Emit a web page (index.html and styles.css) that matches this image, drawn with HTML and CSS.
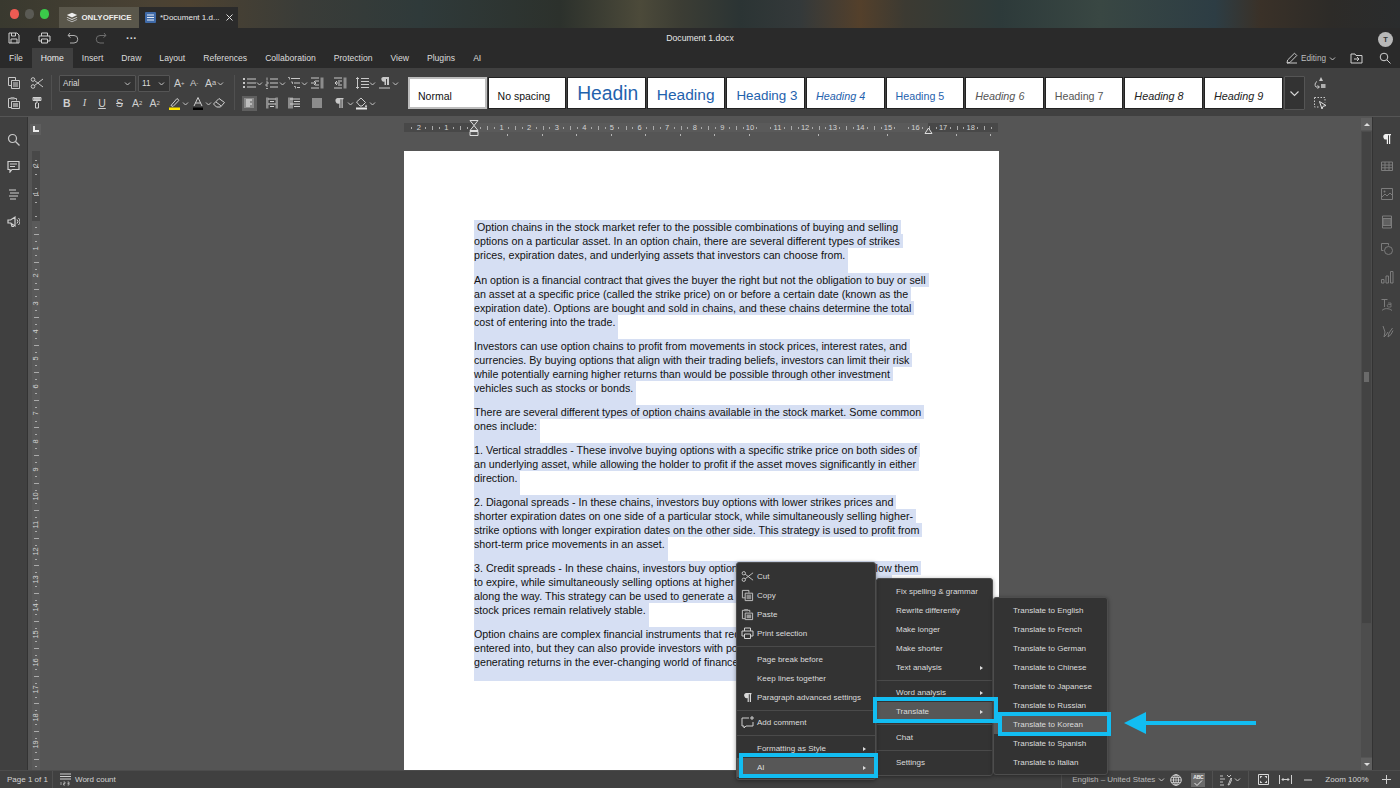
FILE: index.html
```html
<!DOCTYPE html>
<html lang="en">
<head>
<meta charset="utf-8">
<title>Document 1.docx</title>
<link rel="stylesheet" href="styles.css">
</head>
<body>
<svg class="sprite" width="0" height="0">
  <symbol id="chev" viewBox="0 0 7 7"><path d="M1 2.500l2.500 2.500L6 2.500" fill="none" stroke="#c4c4c4"/></symbol>
  <symbol id="copy" viewBox="0 0 14 14"><path d="M1.500 1.500h7v2.500M4.500 4.500h8v8h-8zM1.500 1.500v8h3" fill="none" stroke="#c8c8c8"/><path d="M6 6h5v5H6z" fill="#8a8a8a"/></symbol>
  <symbol id="paste" viewBox="0 0 14 14"><path d="M1.500 2.500h8v2M1.500 2.500v9h3M4.500 5.500h8v7h-8z" fill="none" stroke="#c8c8c8"/><path d="M3.500 1h4v2.500h-4zM6 7h5v4H6z" fill="#9a9a9a"/></symbol>
  <symbol id="scissors" viewBox="0 0 14 14"><circle cx="3" cy="3.500" r="1.800" fill="none" stroke="#c8c8c8"/><circle cx="3" cy="10.500" r="1.800" fill="none" stroke="#c8c8c8"/><path d="M4.500 4.500L13 11M4.500 9.500L13 3" fill="none" stroke="#c8c8c8"/></symbol>
</svg>

<div class="app">
  <div class="wallpaper">
    <div class="lights"><i class="light red"></i><i class="light grey"></i><i class="light green"></i></div>
    <div class="tab-home">
      <svg width="12" height="11" viewBox="0 0 14 12"><path d="M7 .5l6 2.700-6 2.700-6-2.700z" fill="#eee"/><path d="M1.500 5.300L7 7.800l5.500-2.500 .8 .7L7 8.900.7 6z" fill="#ddd"/><path d="M1.500 7.900L7 10.400l5.500-2.500 .8 .7L7 11.500.7 8.600z" fill="#bbb"/></svg>
      <span>ONLYOFFICE</span>
    </div>
    <div class="tab-doc">
      <svg width="11" height="11" viewBox="0 0 11 11"><rect width="11" height="11" rx="1" fill="#3f6aa8"/><path d="M2 3h7M2 5.500h7M2 8h7" stroke="#e8eef8"/></svg>
      <span>*Document 1.d...</span>
      <svg class="close" width="7" height="7" viewBox="0 0 7 7"><path d="M.5 .5l6 6M6.500 .5l-6 6" stroke="#ddd"/></svg>
    </div>
  </div>

  <div class="head-row">
    <div class="quick">
      <svg width="12" height="12" viewBox="0 0 12 12"><path d="M1 1h8l2 2v8H1zM3.500 1v3h4V1M3 11V7h6v4" fill="none" stroke="#d0d0d0"/></svg>
      <svg width="13" height="12" viewBox="0 0 13 12"><path d="M3.500 4V1h6v3M3 9H1V4h11v5h-2M3.500 7h6v4h-6z" fill="none" stroke="#d0d0d0"/></svg>
      <svg width="12" height="12" viewBox="0 0 12 12"><path d="M3 1L1 3.500 3.500 5.500M1.200 3.500H7a3.500 3.500 0 0 1 0 7.500H3" fill="none" stroke="#b0b0b0"/></svg>
      <svg width="12" height="12" viewBox="0 0 12 12"><path d="M9 1l2 2.500L8.500 5.500M10.800 3.500H5a3.500 3.500 0 0 0 0 7.500h4" fill="none" stroke="#6e6e6e"/></svg>
      <span class="dots">···</span>
    </div>
    <div class="doc-title">Document 1.docx</div>
    <div class="avatar-wrap"><div class="avatar">T</div></div>
  </div>

  <div class="tabs-row">
    <nav class="tabs">
      <span class="tab">File</span><span class="tab active">Home</span><span class="tab">Insert</span><span class="tab">Draw</span><span class="tab">Layout</span><span class="tab">References</span><span class="tab">Collaboration</span><span class="tab">Protection</span><span class="tab">View</span><span class="tab">Plugins</span><span class="tab">AI</span>
    </nav>
    <div class="tabs-right">
      <svg width="12" height="12" viewBox="0 0 12 12"><path d="M1 11l.6-3L8.500 1.200l2.300 2.300L4 10.400zM1 11h10" fill="none" stroke="#c8c8c8"/></svg>
      <span class="editing">Editing</span>
      <svg class="ch" width="7" height="7"><use href="#chev"/></svg>
      <svg class="folder" width="13" height="12" viewBox="0 0 13 12"><path d="M1 2h4l1 1.500h6V11H1zM4 7h5M7 5l2 2-2 2" fill="none" stroke="#d0d0d0"/></svg>
      <svg class="find" width="12" height="12" viewBox="0 0 12 12"><circle cx="5" cy="5" r="3.800" fill="none" stroke="#d0d0d0"/><path d="M8 8l3.500 3.500" stroke="#d0d0d0"/></svg>
    </div>
  </div>

  <div class="toolbar">
    <div class="tg clip-group">
      <div class="tr"><span class="cell w23"><svg class="ico" width="14" height="14"><use href="#copy"/></svg></span><span class="cell w23"><svg class="ico" width="14" height="14"><use href="#scissors"/></svg></span></div>
      <div class="tr"><span class="cell w23"><svg class="ico" width="14" height="14"><use href="#paste"/></svg></span><span class="cell w23"><svg class="ico" width="14" height="14" viewBox="0 0 14 14"><path d="M3 1.500h8v3H3zM7 4.500v2.500H5.500v5h3V7" fill="none" stroke="#d0d0d0"/><path d="M3.500 2h7v2h-7z" fill="#bbb"/></svg></span></div>
    </div>
    <div class="vdiv first"></div>
    <div class="tg font-group">
      <div class="tr">
        <div class="select font-sel"><span>Arial</span><svg width="7" height="7"><use href="#chev"/></svg></div>
        <div class="select size-sel"><span>11</span><svg width="7" height="7"><use href="#chev"/></svg></div>
        <span class="cell w16 glyph">A<sup>+</sup></span><span class="cell w16 glyph small">A<sup>-</sup></span>
        <span class="cell w22 glyph aa">A<small>a</small><svg width="7" height="7"><use href="#chev"/></svg></span>
      </div>
      <div class="tr">
        <span class="cell w17 glyph b">B</span><span class="cell w17 glyph i">I</span><span class="cell w17 glyph u">U</span><span class="cell w17 glyph s">S</span><span class="cell w17 glyph">A<sup>2</sup></span><span class="cell w17 glyph">A<sub>2</sub></span>
        <span class="cell w23"><svg class="ico" width="14" height="14" viewBox="0 0 14 14"><path d="M3 9.500L9 2.500l2 1.800L5 10.500z" fill="none" stroke="#d0d0d0"/><rect x="1" y="11.500" width="11" height="2.500" fill="#ffe600"/></svg><svg width="7" height="7"><use href="#chev"/></svg></span>
        <span class="cell w23"><svg class="ico" width="14" height="14" viewBox="0 0 14 14"><path d="M3 10L7 1.500 11 10M4.500 7h5" fill="none" stroke="#d0d0d0"/><rect x="2" y="11.500" width="10" height="2.500" fill="#000"/></svg><svg width="7" height="7"><use href="#chev"/></svg></span>
        <span class="cell w17"><svg class="ico" width="14" height="14" viewBox="0 0 14 14"><path d="M1.500 8l5.500-5.500 5.500 4L8.500 11H4.500z" fill="none" stroke="#d0d0d0"/><path d="M4 6l5 3.800" stroke="#d0d0d0"/></svg></span>
      </div>
    </div>
    <div class="vdiv second"></div>
    <div class="tg para-group">
      <div class="tr">
        <span class="cell w22"><svg class="ico" width="14" height="14" viewBox="0 0 14 14"><path d="M5 3h9M5 7h9M5 11h9" stroke="#c8c8c8"/><path d="M1 2h2v2H1zM1 6h2v2H1zM1 10h2v2H1z" fill="#c8c8c8"/></svg><svg width="7" height="7"><use href="#chev"/></svg></span>
        <span class="cell w22"><svg class="ico" width="14" height="14" viewBox="0 0 14 14"><path d="M5 3h8M5 7h8M5 11h8" stroke="#c8c8c8"/><path d="M2 1.500v3M1 6h2v2H1v2h2M1 12.500h2" fill="none" stroke="#c8c8c8" stroke-width=".8"/></svg><svg width="7" height="7"><use href="#chev"/></svg></span>
        <span class="cell w22"><svg class="ico" width="14" height="14" viewBox="0 0 14 14"><path d="M4 2.500h9M7 7h6M10 11.500h3" stroke="#c8c8c8"/><path d="M1 1.500h1.500v2M4 6h1.500v2M7 10.500h1.500v2" fill="none" stroke="#c8c8c8" stroke-width=".8"/></svg><svg width="7" height="7"><use href="#chev"/></svg></span>
        <span class="cell w22"><svg class="ico" width="14" height="14" viewBox="0 0 14 14"><path d="M10.500 1.500h3v11h-3z" fill="#8c8c8c"/><path d="M1 2h8M5 5h4M5 9h4M1 12h8M1 7h5M4 5l2 2-2 2" fill="none" stroke="#c8c8c8"/></svg></span>
        <span class="cell w22"><svg class="ico" width="14" height="14" viewBox="0 0 14 14"><path d="M10.500 1.500h3v11h-3z" fill="#8c8c8c"/><path d="M1 2h8M5 5h4M5 9h4M1 12h8M7 7H2M4 5L2 7l2 2" fill="none" stroke="#c8c8c8"/></svg></span>
        <span class="cell w22"><svg class="ico" width="14" height="14" viewBox="0 0 14 14"><path d="M6 2.500h8M6 5.500h8M6 8.500h8M6 11.500h8M2.500 1.500v11M1 3l1.500-1.500L4 3M1 11l1.500 1.500L4 11" fill="none" stroke="#c8c8c8"/></svg><svg width="7" height="7"><use href="#chev"/></svg></span>
        <span class="cell w22"><svg class="ico" width="14" height="14" viewBox="0 0 14 14"><path d="M5 1h6v8H9V3H8v6H6.500V5.500A2.300 2.300 0 0 1 5 1z" fill="#c8c8c8"/><path d="M1 12h11" stroke="#c8c8c8"/></svg><svg width="7" height="7"><use href="#chev"/></svg></span>
      </div>
      <div class="tr">
        <span class="cell w22 on"><svg class="ico" width="14" height="14" viewBox="0 0 14 14"><path d="M2 2h10v10H2z" fill="#8a8a8a"/><path d="M4 4h6M4 6h4M4 8h6M4 10h4" stroke="#efefef"/></svg></span>
        <span class="cell w22"><svg class="ico" width="14" height="14" viewBox="0 0 14 14"><path d="M1 1.500h2.500v11H1zM10.500 1.500H13v11h-2.500z" fill="#8c8c8c"/><path d="M3 3h8M5 5.500h4M3 8h8M5 10.500h4" stroke="#d0d0d0"/></svg></span>
        <span class="cell w22"><svg class="ico" width="14" height="14" viewBox="0 0 14 14"><path d="M1 1.500h5v11H1z" fill="#8c8c8c"/><path d="M3 3h10M7 5.500h6M3 8h10M7 10.500h6" stroke="#d0d0d0"/></svg></span>
        <span class="cell w22"><svg class="ico" width="14" height="14" viewBox="0 0 14 14"><path d="M2 2h10v10H2z" fill="#8c8c8c"/></svg></span>
        <span class="cell w22"><svg class="ico" width="14" height="14" viewBox="0 0 14 14"><path d="M4.500 2h6v1.200h-.8V12H8.500V3.200h-1V12H6.300V7.500A2.800 2.800 0 0 1 4.500 2z" fill="#c8c8c8"/></svg><svg width="7" height="7"><use href="#chev"/></svg></span>
        <span class="cell w22"><svg class="ico" width="14" height="14" viewBox="0 0 14 14"><path d="M1.500 6L6 2l4.500 4.500-3.500 3.500H5z" fill="none" stroke="#d0d0d0"/><path d="M11 8.500l1.200 2-1.200 .8-1.200-.8z" fill="#d0d0d0"/><rect x="1" y="11.500" width="11" height="2" fill="#e8e8e8"/></svg><svg width="7" height="7"><use href="#chev"/></svg></span>
      </div>
    </div>
    <div class="styles">
      <div class="tile selected normal"><span>Normal</span></div>
      <div class="tile normal"><span>No spacing</span></div>
      <div class="tile h1"><span>Headin</span></div>
      <div class="tile h2"><span>Heading</span></div>
      <div class="tile h3"><span>Heading 3</span></div>
      <div class="tile h4"><span>Heading 4</span></div>
      <div class="tile h5"><span>Heading 5</span></div>
      <div class="tile h6"><span>Heading 6</span></div>
      <div class="tile h7"><span>Heading 7</span></div>
      <div class="tile h8"><span>Heading 8</span></div>
      <div class="tile h8"><span>Heading 9</span></div>
      <div class="more-styles"><svg width="11" height="11" viewBox="0 0 11 11"><path d="M1.500 3.500l4 4 4-4" fill="none" stroke="#d8d8d8" stroke-width="1.100"/></svg></div>
    </div>
    <div class="tg side-tools">
      <div class="tr"><svg width="14" height="14" viewBox="0 0 14 14"><path d="M4 5.500A3.500 3.500 0 0 0 3 11h3M4.500 9.500L6.500 11l-2 1.500" fill="none" stroke="#c8c8c8"/><path d="M8 1l2 4H6z" fill="#c8c8c8"/><rect x="8" y="8" width="4.500" height="4" fill="#b0b0b0"/></svg></div>
      <div class="tr"><svg width="14" height="14" viewBox="0 0 14 14"><path d="M1.500 1.500h10.500v5M1.500 1.500v9.500H6" fill="none" stroke="#c8c8c8" stroke-dasharray="1.500 1.500"/><path d="M6.500 5.500l6.500 4-3 .8-1 2.700z" fill="none" stroke="#e0e0e0"/></svg></div>
    </div>
  </div>

  <div class="main">
    <aside class="left-panel">
      <svg width="13" height="13" viewBox="0 0 13 13"><circle cx="5.500" cy="5.500" r="4" fill="none" stroke="#c8c8c8" stroke-width="1.200"/><path d="M8.500 8.500l4 4" stroke="#c8c8c8" stroke-width="1.200"/></svg>
      <svg width="13" height="13" viewBox="0 0 13 13"><path d="M1 1.500h11v8H5L3 12V9.500H1z" fill="none" stroke="#d0d0d0" stroke-width="1.200"/><path d="M3 4h7M3 6.500h5" stroke="#d0d0d0"/></svg>
      <svg width="13" height="13" viewBox="0 0 13 13"><path d="M2 2h7M3 5h9M2 8h9M3 11h6" stroke="#d0d0d0" stroke-width="1.200"/></svg>
      <svg width="13" height="13" viewBox="0 0 13 13"><path d="M1 5h2.500L8 2v9L3.500 8H1zM4 8l1 3.500h2" fill="none" stroke="#d0d0d0" stroke-width="1.200"/><path d="M10 4.500a3 3 0 0 1 0 4M11.500 3a5 5 0 0 1 0 7" fill="none" stroke="#d0d0d0"/></svg>
    </aside>
    <div class="v-rail">
      <div class="corner"><svg width="7" height="7" viewBox="0 0 7 7"><path d="M1 0h2v4h4v2H1z" fill="#eee"/></svg></div>
      <div class="v-ruler">
        <span>2</span><span>1</span><span></span><span>1</span><span>2</span><span>3</span><span>4</span><span>5</span><span>6</span><span>7</span><span>8</span><span>9</span><span>10</span><span>11</span><span>12</span><span>13</span><span>14</span><span>15</span><span>16</span><span>17</span><span>18</span><span>19</span>
      </div>
    </div>
    <div class="canvas">
      <div class="h-ruler">
        <div class="h-band">
          <span>2</span><span>1</span><span></span><span>1</span><span>2</span><span>3</span><span>4</span><span>5</span><span>6</span><span>7</span><span>8</span><span>9</span><span>10</span><span>11</span><span>12</span><span>13</span><span>14</span><span>15</span><span>16</span><span>17</span><span>18</span>
        </div>
        <svg class="marker-l" width="10" height="16" viewBox="0 0 10 16"><path d="M1 .5h8L5 5.500zM1 10.500L5 5.500l4 5zM1 11.500h8v4H1z" fill="#555" stroke="#ddd"/></svg>
        <svg class="marker-r" width="9" height="7" viewBox="0 0 9 7"><path d="M1 6.500L4.500 1 8 6.500z" fill="#555" stroke="#ddd"/></svg>
      </div>
      <article class="page">
        <p><span class="sel lead">Option chains in the stock market refer to the possible combinations of buying and selling</span><br><span class="sel">options on a particular asset. In an option chain, there are several different types of strikes</span><br><span class="sel end">prices, expiration dates, and underlying assets that investors can choose from.</span></p>
        <p><span class="sel">An option is a financial contract that gives the buyer the right but not the obligation to buy or sell</span><br><span class="sel">an asset at a specific price (called the strike price) on or before a certain date (known as the</span><br><span class="sel">expiration date). Options are bought and sold in chains, and these chains determine the total</span><br><span class="sel end">cost of entering into the trade.</span></p>
        <p><span class="sel">Investors can use option chains to profit from movements in stock prices, interest rates, and</span><br><span class="sel">currencies. By buying options that align with their trading beliefs, investors can limit their risk</span><br><span class="sel">while potentially earning higher returns than would be possible through other investment</span><br><span class="sel end">vehicles such as stocks or bonds.</span></p>
        <p><span class="sel">There are several different types of option chains available in the stock market. Some common</span><br><span class="sel end">ones include:</span></p>
        <p><span class="sel">1. Vertical straddles - These involve buying options with a specific strike price on both sides of</span><br><span class="sel">an underlying asset, while allowing the holder to profit if the asset moves significantly in either</span><br><span class="sel end">direction.</span></p>
        <p><span class="sel">2. Diagonal spreads - In these chains, investors buy options with lower strikes prices and</span><br><span class="sel">shorter expiration dates on one side of a particular stock, while simultaneously selling higher-</span><br><span class="sel">strike options with longer expiration dates on the other side. This strategy is used to profit from</span><br><span class="sel end">short-term price movements in an asset.</span></p>
        <p><span class="sel">3. Credit spreads - In these chains, investors buy options at lower strike prices and allow them</span><br><span class="sel">to expire, while simultaneously selling options at higher strike prices to collect premiums</span><br><span class="sel">along the way. This strategy can be used to generate a steady income when</span><br><span class="sel end">stock prices remain relatively stable.</span></p>
        <p><span class="sel">Option chains are complex financial instruments that require careful thought before being</span><br><span class="sel">entered into, but they can also provide investors with potential benefits and</span><br><span class="sel end last">generating returns in the ever-changing world of finance and the stock market.</span></p>
      </article>
    </div>
    <div class="scroll">
      <div class="s-btn"><i class="up"></i></div>
      <div class="s-track"><div class="s-thumb"><b></b></div></div>
      <div class="s-btn"><i class="down"></i></div>
    </div>
    <aside class="right-panel">
      <svg width="14" height="14" viewBox="0 0 14 14"><path d="M5.500 2H11v1.300h-.8V12H9V3.300H8V12H6.800V7.500A2.800 2.800 0 0 1 5.500 2z" fill="#f0f0f0"/></svg>
      <svg width="14" height="14" viewBox="0 0 14 14"><path d="M1.500 3h11v8.500h-11zM1.500 6h11M1.500 8.800h11M5 3v8.500M9 3v8.500" fill="none" stroke="#7c7c7c"/></svg>
      <svg width="14" height="14" viewBox="0 0 14 14"><path d="M1.500 1.500h11v11h-11z" fill="none" stroke="#7c7c7c"/><path d="M2 10l3-3 2 2 3-3 2 2" fill="none" stroke="#7c7c7c"/><circle cx="4.500" cy="4.500" r="1" fill="#7c7c7c"/></svg>
      <svg width="14" height="14" viewBox="0 0 14 14"><path d="M2.500 1h9v12h-9z" fill="none" stroke="#7c7c7c"/><path d="M3 3.500h8v7H3z" fill="#606060" stroke="#7c7c7c"/></svg>
      <svg width="14" height="14" viewBox="0 0 14 14"><path d="M1.500 1.500h7v2M1.500 1.500v7h2" fill="none" stroke="#7c7c7c"/><circle cx="8.500" cy="8.500" r="4" fill="none" stroke="#7c7c7c"/></svg>
      <svg width="14" height="14" viewBox="0 0 14 14"><path d="M1.500 9.500h2.500v3.500H1.500zM6 6h2.500v7H6zM10.500 1.500H13V13h-2.500z" fill="none" stroke="#7c7c7c"/></svg>
      <svg width="14" height="14" viewBox="0 0 14 14"><path d="M1.500 1.500h6M4.500 1.500V9" fill="none" stroke="#7c7c7c"/><path d="M2 12.500c2-2.500 7-2.500 10 0" fill="none" stroke="#7c7c7c"/><path d="M8 5h3v4H8.500a1 1 0 0 1 0-2.500H11" fill="none" stroke="#7c7c7c" stroke-width=".8"/></svg>
      <svg width="14" height="14" viewBox="0 0 14 14"><path d="M3 1l2 6-1 5 2-2 2-3M12.500 3L9 8l-1 4 3-2.500 2-4" fill="none" stroke="#7c7c7c"/></svg>
    </aside>
  </div>

  <footer class="status">
    <span class="page-count">Page 1 of 1</span>
    <div class="status-div"></div>
    <svg class="wc-ico" width="11" height="13" viewBox="0 0 11 13"><path d="M0 1h11M0 3.500h11M0 6h11" stroke="#d0d0d0"/><path d="M1 9v3M3.500 9H5v1.500H3.500V12H5M7.500 9H9v3H7.500M7.500 10.500H9" fill="none" stroke="#d0d0d0" stroke-width=".7"/></svg>
    <span class="wc">Word count</span>
    <div class="status-right">
      <div class="status-div lang-div"></div>
      <span class="lang">English – United States</span>
      <svg class="ch" width="7" height="7"><use href="#chev"/></svg>
      <svg class="st-globe" width="12" height="12" viewBox="0 0 12 12"><circle cx="6" cy="6" r="5.300" fill="none" stroke="#d0d0d0"/><ellipse cx="6" cy="6" rx="2.500" ry="5.300" fill="none" stroke="#d0d0d0"/><path d="M.7 6h10.600M6 .7v10.600M1.500 3.500h9M1.500 8.500h9" stroke="#d0d0d0" stroke-width=".8"/></svg>
      <span class="abc">ABC<svg width="10" height="6" viewBox="0 0 10 6"><path d="M1.500 3l2.500 2.500L9 .5" fill="none" stroke="#e8e8e8"/></svg></span>
      <div class="status-div"></div>
      <svg class="st-track" width="12" height="12" viewBox="0 0 12 12"><path d="M0 2h3M0 5h5M0 8h3M0 11h4M7 1l2 2 2-2M9 9l2-5 1 1-2.500 5.500L8 11z" fill="none" stroke="#d0d0d0" stroke-width=".9"/></svg>
      <svg class="ch" width="7" height="7"><use href="#chev"/></svg>
      <div class="status-div"></div>
      <svg class="st-fit" width="11" height="11" viewBox="0 0 11 11"><path d="M.5 .5h10v10H.5z" fill="none" stroke="#d8d8d8"/><path d="M2 2h2.500L2 4.500zM9 2v2.500L6.500 2zM2 9V6.500L4.500 9zM9 9H6.500L9 6.500z" fill="#d8d8d8"/></svg>
      <svg class="st-width" width="13" height="9" viewBox="0 0 13 9"><path d="M.5 0v9M12.500 0v9M3 4.500h7M4.500 3L3 4.500 4.500 6M8.500 3L10 4.500 8.500 6" fill="none" stroke="#d0d0d0"/></svg>
      <svg class="st-minus" width="8" height="8" viewBox="0 0 8 8"><path d="M0 4h8" stroke="#d0d0d0"/></svg>
      <span class="zoom">Zoom 100%</span>
      <svg class="st-plus" width="9" height="9" viewBox="0 0 9 9"><path d="M0 4.500h9M4.500 0v9" stroke="#d0d0d0"/></svg>
    </div>
  </footer>

  <div class="menu menu-main">
    <div class="mi"><svg width="13" height="13"><use href="#scissors"/></svg><span>Cut</span></div>
    <div class="mi"><svg width="13" height="13"><use href="#copy"/></svg><span>Copy</span></div>
    <div class="mi"><svg width="13" height="13"><use href="#paste"/></svg><span>Paste</span></div>
    <div class="mi"><svg width="13" height="13" viewBox="0 0 13 13"><path d="M3.500 4V1h6v3M3 9H1V4h11v5h-2M3.500 7h6v4.500h-6z" fill="none" stroke="#d0d0d0"/></svg><span>Print selection</span></div>
    <hr>
    <div class="mi plain"><span>Page break before</span></div>
    <div class="mi plain"><span>Keep lines together</span></div>
    <div class="mi"><svg width="13" height="13" viewBox="0 0 13 13"><path d="M5 2h5.500v1.200H10V11H8.800V3.200H7.800V11H6.600V7A2.500 2.500 0 0 1 5 2z" fill="#d8d8d8"/></svg><span>Paragraph advanced settings</span></div>
    <hr class="thin">
    <div class="mi"><svg width="13" height="13" viewBox="0 0 13 13"><path d="M8 2H1v8h2v2l2-2h7V6" fill="none" stroke="#d0d0d0"/><path d="M11 0v4M9 2h4" stroke="#d0d0d0"/></svg><span>Add comment</span></div>
    <hr>
    <div class="mi plain sub"><span>Formatting as Style</span></div>
    <div class="mi plain sub hot"><span>AI</span></div>
  </div>
  <div class="menu menu-ai">
    <div class="mi"><span>Fix spelling &amp; grammar</span></div>
    <div class="mi"><span>Rewrite differently</span></div>
    <div class="mi"><span>Make longer</span></div>
    <div class="mi"><span>Make shorter</span></div>
    <div class="mi sub"><span>Text analysis</span></div>
    <hr class="thin">
    <div class="mi sub"><span>Word analysis</span></div>
    <div class="mi sub hot"><span>Translate</span></div>
    <hr>
    <div class="mi"><span>Chat</span></div>
    <hr class="thin">
    <div class="mi"><span>Settings</span></div>
  </div>
  <div class="menu menu-tr">
    <div class="mi"><span>Translate to English</span></div>
    <div class="mi"><span>Translate to French</span></div>
    <div class="mi"><span>Translate to German</span></div>
    <div class="mi"><span>Translate to Chinese</span></div>
    <div class="mi"><span>Translate to Japanese</span></div>
    <div class="mi"><span>Translate to Russian</span></div>
    <div class="mi hot"><span>Translate to Korean</span></div>
    <div class="mi"><span>Translate to Spanish</span></div>
    <div class="mi"><span>Translate to Italian</span></div>
  </div>
  <div class="callout c-ai"></div>
  <div class="callout c-translate"></div>
  <div class="callout c-korean"></div>
  <svg class="arrow" width="132" height="24" viewBox="0 0 132 24"><path d="M0 12L22 1v9h110v4H22v9z" fill="#12bdf2"/></svg>
</div>
</body>
</html>
```

FILE: styles.css
```css
* { box-sizing: border-box; }
html, body { margin: 0; padding: 0; }
body { width: 1400px; height: 788px; overflow: hidden; background: #404040; font-family: "Liberation Sans", Arial, sans-serif; color: #d8d8d8; }
.sprite { position: absolute; }
svg { display: block; flex: none; }
.app { position: relative; width: 1400px; height: 788px; display: flex; flex-direction: column; overflow: hidden; }

.wallpaper { height: 28px; display: flex; align-items: flex-end; background: linear-gradient(90deg, #39392f 0, #4a4234 150px, #4d4231 190px, #3a3c38 300px, #2f3a3a 420px, #2c312c 560px, #4c4a3a 640px, #3c3d34 680px, #2b3434 740px, #34393a 800px, #54402b 860px, #3c3a32 905px, #2d3a3a 1000px, #394743 1100px, #2d3d44 1215px, #3a3128 1260px, #2d2b28 1330px, #2a2c2d 1400px); }
.lights { display: flex; width: 59px; height: 28px; align-items: center; gap: 5.500px; padding-left: 9.500px; }
.light { width: 9.500px; height: 9.500px; border-radius: 50%; }
.red { background: #ee5b53; }
.grey { background: #5a5a54; }
.green { background: #3bc94a; }
.tab-home { width: 80px; height: 21px; display: flex; align-items: center; justify-content: center; gap: 3px; background: #5a574b; font-size: 7.900px; font-weight: 700; color: #eee; }
.tab-doc { width: 99px; height: 21px; display: flex; align-items: center; padding-left: 6px; background: #2b2b2b; font-size: 8px; color: #e8e8e8; }
.tab-doc span { margin-left: 4px; white-space: nowrap; }
.tab-doc .close { margin-left: 6px; }

.head-row { height: 20px; display: grid; grid-template-columns: 1fr auto 1fr; align-items: center; background: #2a2a2a; }
.quick { display: flex; align-items: center; padding-left: 8px; }
.quick svg:nth-child(1) { margin-right: 17.500px; }
.quick svg:nth-child(2) { margin-right: 16.500px; }
.quick svg:nth-child(3) { margin-right: 16px; }
.quick svg:nth-child(4) { margin-right: 19px; }
.dots { font-size: 11px; font-weight: 700; line-height: 10px; }
.doc-title { font-size: 8.700px; color: #e8e8e8; }
.avatar-wrap { display: flex; justify-content: flex-end; padding-right: 7px; padding-top: 2px; }
.avatar { width: 15px; height: 15px; border-radius: 50%; background: #b8b8b8; color: #333; font-size: 7.500px; font-weight: 700; display: flex; align-items: center; justify-content: center; }

.tabs-row { height: 20px; display: flex; justify-content: space-between; background: #2a2a2a; }
.tabs { display: flex; }
.tab { padding: 0 9px; font-size: 8.600px; line-height: 20px; color: #dcdcdc; }
.tab.active { background: #404040; color: #efefef; }
.tabs-right { display: flex; align-items: center; padding-right: 9px; }
.editing { font-size: 8.200px; color: #bdbdbd; margin-left: 3px; margin-right: 3px; }
.folder { margin-left: 14px; margin-right: 16px; }

.toolbar { height: 49px; padding: 7px 0 0 3px; display: flex; align-items: flex-start; background: #404040; border-bottom: 1px solid #555; }
.tg { display: flex; flex-direction: column; gap: 4px; }
.tr { height: 16px; display: flex; align-items: center; }
.vdiv { width: 1px; height: 35px; margin: 0 6px; background: #505050; }
.vdiv.first { margin-left: 2px; }
.vdiv.second { margin-right: 5px; }
.clip-group { width: 46px; }
.font-group { width: 170px; }
.para-group { width: 159px; }
.cell { height: 16px; display: flex; align-items: center; flex: none; }
.w23 { width: 23px; padding-left: 4px; }
.w22 { width: 22.670px; padding-left: 2px; }
.w17 { width: 17.600px; padding-left: 2px; }
.w16 { width: 16px; padding-left: 3px; }
.on { position: relative; }
.on::before { content: ""; position: absolute; left: 2px; top: 1px; width: 15px; height: 15px; background: #5f5f5f; }
.on svg { position: relative; }
.select { height: 17px; display: flex; align-items: center; justify-content: space-between; padding: 0 4px 0 3px; background: #333; border: 1px solid #555; font-size: 8.200px; color: #dcdcdc; border-radius: 1px; }
.font-sel { width: 77px; margin-left: 1px; margin-right: 2px; }
.size-sel { width: 32px; margin-right: 1px; }
.glyph { font-size: 10.500px; color: #cfcfcf; line-height: 16px; }
.glyph sup { font-size: 6px; line-height: 0; vertical-align: 4px; }
.glyph sub { font-size: 6px; line-height: 0; vertical-align: -2px; }
.glyph small { font-size: 7.500px; }
.small { font-size: 9.500px; }
.aa { padding-left: 2px; }
.aa svg { margin-left: 1px; }
.font-group .tr + .tr .glyph { justify-content: center; padding-left: 0; }
.b { font-weight: 700; }
.i { font-style: italic; font-family: "Liberation Serif", serif; }
.u { text-decoration: underline; }
.s { text-decoration: line-through; }

.styles { display: flex; align-items: stretch; gap: 1px; height: 32px; margin-left: 9px; margin-top: 2px; }
.tile { width: 78.600px; display: flex; align-items: center; padding-left: 9px; padding-top: 6px; background: #fff; border: 1px solid #222; color: #111; font-size: 10.500px; white-space: nowrap; overflow: hidden; }
.tile.selected { border: 2px solid #bdbdbd; padding-left: 8px; }
.h1, .h2, .h3, .h4, .h5 { color: #1f62ad; }
.tile.h1 { font-size: 19.300px; padding-top: 2px; }
.tile.h2 { font-size: 15.500px; padding-top: 4px; }
.tile.h3 { font-size: 13.400px; padding-top: 4px; }
.h4 { font-size: 10.800px; font-style: italic; }
.h5 { font-size: 10.700px; }
.h6 { font-size: 10.800px; font-style: italic; color: #555; }
.h7 { font-size: 10.700px; color: #555; }
.h8 { font-size: 10.800px; font-style: italic; color: #222; }
.more-styles { width: 21px; margin: -1px 0; display: flex; align-items: center; justify-content: center; background: #333; border: 1px solid #555; border-radius: 1px; }
.side-tools { margin-left: 8px; width: 14px; }

.main { flex: 1; min-height: 0; display: flex; background: #555; }
.left-panel { width: 28px; padding-top: 15.500px; display: flex; flex-direction: column; align-items: center; gap: 14.500px; background: #404040; border-right: 1px solid #333; }
.v-rail { width: 14px; margin-left: 2px; padding-top: 7px; display: flex; flex-direction: column; align-items: flex-start; }
.corner { width: 11px; height: 11px; display: flex; align-items: center; justify-content: center; background: #5e5e5e; margin-bottom: 16px; }
.v-ruler { width: 8px; margin-left: 2px; height: 619px; padding-top: 1px; font-size: 7.500px; color: #d4d4d4;
  background-image:
    repeating-linear-gradient(180deg, transparent 0, transparent 6.400px, #aaa 6.400px, #aaa 7.400px, transparent 7.400px, transparent 13.800px),
    repeating-linear-gradient(180deg, transparent 0, transparent 13.300px, #aaa 13.300px, #aaa 14.300px, transparent 14.300px, transparent 27.600px),
    linear-gradient(180deg, #484848 70px, #5a5a5a 70px);
  background-size: 2px 100%, 5px 100%, 100% 100%;
  background-position: 3px 70px, 1.500px 70px, 0 0;
  background-repeat: repeat-y, repeat-y, no-repeat;
}
.v-ruler span { display: block; height: 27.600px; writing-mode: vertical-rl; transform: rotate(180deg); text-align: center; line-height: 8px; }
.canvas { width: 1317px; flex: none; position: relative; padding-top: 6px; overflow: hidden; }
.h-ruler { position: relative; width: 594px; height: 13px; margin-left: 360px; background-image: repeating-linear-gradient(90deg, transparent 0, transparent 33.500px, #b4b4b4 33.500px, #b4b4b4 34.500px); background-size: 100% 2px; background-position: 70px 11px; background-repeat: no-repeat; }
.h-band { height: 9px; padding-left: 1px; display: flex; font-size: 7.500px; line-height: 9px; color: #d4d4d4; text-align: center;
  background-image:
    repeating-linear-gradient(90deg, transparent 0, transparent 6.400px, #aaa 6.400px, #aaa 7.400px, transparent 7.400px, transparent 13.800px),
    repeating-linear-gradient(90deg, transparent 0, transparent 13.300px, #aaa 13.300px, #aaa 14.300px, transparent 14.300px, transparent 27.600px),
    linear-gradient(90deg, #484848 70px, #5a5a5a 70px, #5a5a5a 524px, #484848 524px);
  background-size: 100% 2px, 100% 4px, 100% 100%;
  background-position: 1px 3.500px, 15px 2.500px, 0 0;
  background-repeat: no-repeat;
}
.h-band span { width: 27.600px; flex: none; }
.marker-l { position: absolute; left: 65px; top: -3px; }
.marker-r { position: absolute; left: 520px; top: 4px; }
.page { width: 595px; height: 640px; margin-left: 360px; margin-top: 15px; padding: 69px 0 0 70px; background: #fff; color: #111; font-size: 10.700px; line-height: 14px; }
.page p { margin: 0; white-space: nowrap; }
.sel { display: inline-block; height: 14px; padding-right: 3px; background: #d6dff3; vertical-align: top; }
.lead { padding-left: 3px; }
.end { height: 24px; }
.page p:first-child .end { height: 25px; }
.end.last { height: 26px; }

.scroll { width: 11px; padding-top: 1px; display: flex; flex-direction: column; gap: 1px; }
.s-btn { height: 12px; display: flex; align-items: center; justify-content: center; background: #5f5f5f; flex: none; }
.s-btn i { width: 0; height: 0; border-left: 3px solid transparent; border-right: 3px solid transparent; }
.up { border-bottom: 3px solid #ddd; }
.down { border-top: 3px solid #ddd; }
.s-track { flex: 1; background: #4d4d4d; padding-bottom: 133px; }
.s-thumb { height: 100%; background: #434343; border: 1px solid #4c4c4c; position: relative; }
.s-thumb b { position: absolute; left: 2px; top: 240px; width: 5px; height: 10px; background: #6a6a6a; }
.right-panel { flex: 1; padding-top: 14.500px; display: flex; flex-direction: column; align-items: center; gap: 13.700px; background: #404040; border-left: 1px solid #333; }

.status { height: 18px; position: relative; display: flex; align-items: center; background: #404040; border-top: 1px solid #4c4c4c; font-size: 8px; color: #d4d4d4; }
.page-count { padding-left: 7px; width: 52px; white-space: nowrap; }
.status-div { width: 1px; height: 17px; background: #505050; flex: none; }
.wc-ico { margin-left: 7px; }
.wc { margin-left: 4px; }
.status-right { margin-left: auto; display: flex; align-items: center; padding-right: 9px; }
.lang-div { margin-right: 10px; }
.lang { color: #b8b8b8; white-space: nowrap; }
.status-right .ch { margin-left: 2.500px; }
.st-globe { margin-left: 5.500px; }
.abc { width: 14px; height: 14px; margin-left: 9px; margin-right: 7px; background: #6a6a6a; font-size: 5px; font-weight: 700; color: #eee; line-height: 6px; text-align: center; display: flex; flex-direction: column; align-items: center; padding-top: 1px; letter-spacing: -.2px; }
.st-track { margin-left: 7px; }
.status-right .st-track + .ch { margin-left: 1.500px; margin-right: 7.500px; }
.st-fit { margin-left: 8.500px; }
.st-width { margin-left: 10px; }
.st-minus { margin-left: 12.500px; }
.zoom { margin-left: 13px; white-space: nowrap; }
.st-plus { margin-left: 13.500px; }

.menu { position: absolute; padding: 4px 0; background: #333; border: 1px solid #4d4d4d; border-radius: 3px; font-size: 8px; color: #dcdcdc; box-shadow: 0 1px 4px rgba(0,0,0,.4); }
.menu-main { left: 736px; top: 562px; width: 140px; height: 218px; z-index: 3; }
.menu-ai { left: 876px; top: 578px; width: 117px; height: 198px; padding-top: 3px; z-index: 2; }
.menu-tr { left: 993px; top: 597px; width: 115px; height: 178px; padding-top: 3px; z-index: 3; }
.mi { height: 19px; display: flex; align-items: center; position: relative; white-space: nowrap; }
.menu-main .mi { padding-left: 4px; }
.menu-main .mi span { margin-left: 3px; }
.menu-main .plain { padding-left: 20px; }
.menu-main .plain span { margin-left: 0; }
.menu-ai .mi { padding-left: 19px; }
.menu-tr .mi { padding-left: 19px; }
.menu hr { height: 1px; margin: 3px 0; border: 0; background: #4a4a4a; }
.menu hr.thin { margin: 3px 0 2px; }
.sub::after { content: ""; position: absolute; right: 9px; top: 8px; border-left: 3px solid #ddd; border-top: 2px solid transparent; border-bottom: 2px solid transparent; }
.hot { background: #575757; }
.callout { position: absolute; border: 4px solid #12bdf2; z-index: 4; }
.c-ai { left: 739px; top: 753px; width: 139px; height: 25px; }
.c-translate { left: 873px; top: 697px; width: 125px; height: 26px; }
.c-korean { left: 998px; top: 712px; width: 113px; height: 24px; }
.arrow { position: absolute; left: 1123.500px; top: 711px; z-index: 4; }
```
